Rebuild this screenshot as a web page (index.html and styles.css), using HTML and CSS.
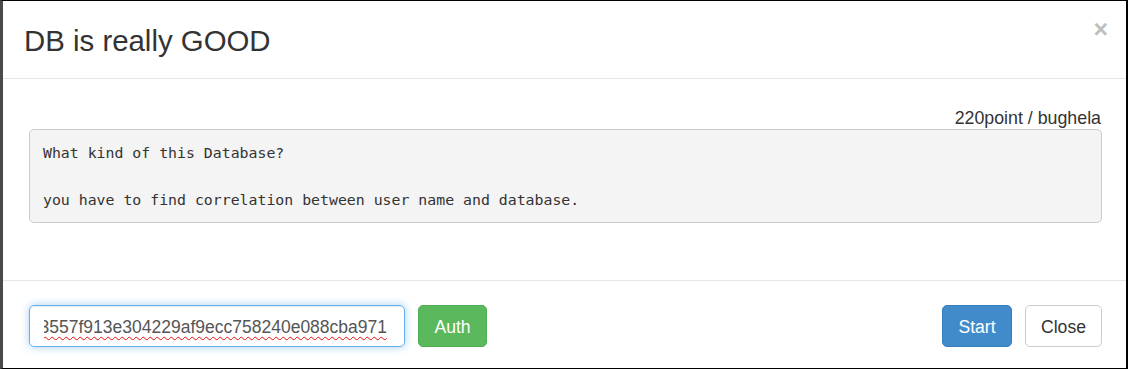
FILE: index.html
```html
<!DOCTYPE html>
<html>
<head>
<meta charset="utf-8">
<link rel="stylesheet" href="styles.css">
</head>
<body>
<div class="frame">
  <div class="modal-header">
    <h3 class="modal-title">DB is really GOOD</h3>
    <span class="close">×</span>
  </div>
  <div class="modal-body">
    <div class="meta">220point / bughela</div>
    <pre class="desc">What kind of this Database?

you have to find correlation between user name and database.</pre>
  </div>
  <div class="modal-footer">
    <div class="left">
      <div class="input"><div class="input-clip"><span class="input-text">3557f913e304229af9ecc758240e088cba971</span></div></div>
      <button class="btn btn-success">Auth</button>
    </div>
    <div class="right">
      <button class="btn btn-primary">Start</button>
      <button class="btn btn-default">Close</button>
    </div>
  </div>
</div>
</body>
</html>
```
FILE: styles.css
```css
html, body {
  margin: 0;
  padding: 0;
  background: #fff;
}
.frame {
  box-sizing: border-box;
  width: 1128px;
  height: 369px;
  border-top: 1px solid #000;
  border-left: 3px solid #4a4a4a;
  border-right: 2px solid #000;
  border-bottom: 1px solid #000;
  background: #fff;
  font-family: "Liberation Sans", Arial, sans-serif;
  color: #333;
  display: flex;
  flex-direction: column;
}
.modal-header {
  height: 77px;
  border-bottom: 1px solid #e5e5e5;
  display: flex;
  justify-content: space-between;
  align-items: center;
  padding: 0 18px 0 21px;
}
.modal-title {
  margin: 0;
  font-size: 29.4px;
  font-weight: normal;
  line-height: 34px;
  color: #333;
  padding-top: 2px;
}
.close {
  align-self: flex-start;
  margin-top: 16px;
  font-size: 25px;
  font-weight: bold;
  line-height: 25px;
  color: #000;
  opacity: 0.25;
}
.modal-body {
  height: 201px;
  box-sizing: border-box;
  padding: 26px 24px 0 26px;
}
.meta {
  text-align: right;
  font-size: 17.8px;
  line-height: 24px;
  height: 24px;
  padding-right: 1px;
  margin-top: 1px;
  margin-bottom: -1px;
}
.desc {
  box-sizing: border-box;
  margin: 0;
  height: 94px;
  padding: 12px 13px;
  background: #f4f4f4;
  border: 1px solid #ccc;
  border-radius: 5px;
  font-family: "DejaVu Sans Mono", monospace;
  font-size: 14.85px;
  line-height: 23.5px;
  color: #333;
  white-space: pre;
}
.modal-footer {
  border-top: 1px solid #e5e5e5;
  height: 87px;
  box-sizing: border-box;
  padding: 24px 24px 0 26px;
  display: flex;
  justify-content: space-between;
  align-items: flex-start;
}
.left, .right {
  display: flex;
  gap: 13px;
}
.input {
  box-sizing: border-box;
  width: 376px;
  height: 42px;
  border: 1px solid #66afe9;
  border-radius: 5px;
  box-shadow: inset 0 1px 1px rgba(0,0,0,.075), 0 0 8px rgba(102,175,233,.6);
  padding: 2px 17px 0 14px;
  display: flex;
  align-items: center;
  font-size: 17.5px;
  color: #555;
}
.input-clip {
  flex: 1;
  display: flex;
  justify-content: flex-end;
  overflow: hidden;
  white-space: nowrap;
  padding-bottom: 4px;
  margin-bottom: -4px;
}
.input-text {
  flex: none;
  text-decoration: underline wavy #e81010;
  text-decoration-thickness: 1px;
  text-underline-offset: 3px;
}
.btn {
  box-sizing: border-box;
  height: 42px;
  padding: 2px 0 0;
  border: 1px solid transparent;
  border-radius: 5px;
  font-family: "Liberation Sans", Arial, sans-serif;
  font-size: 17.6px;
  line-height: 38px;
  text-align: center;
  cursor: pointer;
}
.btn-success {
  width: 69px;
  background: #5cb85c;
  border-color: #4cae4c;
  color: #fff;
}
.btn-primary {
  width: 70px;
  background: #428bca;
  border-color: #357ebd;
  color: #fff;
}
.btn-default {
  width: 77px;
  background: #fff;
  border-color: #ccc;
  color: #333;
}
```
